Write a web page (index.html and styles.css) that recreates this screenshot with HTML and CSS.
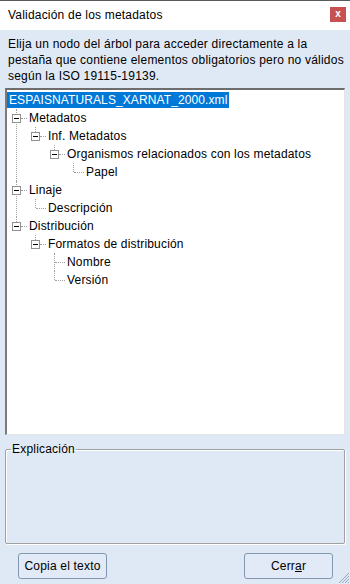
FILE: index.html
```html
<!DOCTYPE html>
<html lang="es">
<head>
    <meta charset="UTF-8">
    <meta name="viewport" content="width=device-width, initial-scale=1.0">
    <title>Validación de los metadatos</title>
    <link rel="stylesheet" href="styles.css">
</head>
<body>
    <div class="window">
        <div class="titlebar">
            <span class="title">Validación de los metadatos</span>
            <span class="close">x</span>
        </div>
        <div class="content">
            <p class="intro">Elija un nodo del árbol para acceder directamente a la pestaña que contiene elementos obligatorios pero no válidos según la ISO 19115-19139.</p>
            <div class="treebox">
                <ul class="tree">
                    <li class="root">
                        <div class="node"><span class="label selected">ESPAISNATURALS_XARNAT_2000.xml</span></div>
                        <ul>
                            <li>
                                <div class="node"><span class="exp"></span><span class="dash"></span><span class="label">Metadatos</span></div>
                                <ul>
                                    <li class="last">
                                        <div class="node"><span class="exp"></span><span class="dash"></span><span class="label">Inf. Metadatos</span></div>
                                        <ul>
                                            <li class="last">
                                                <div class="node"><span class="exp"></span><span class="dash"></span><span class="label">Organismos relacionados con los metadatos</span></div>
                                                <ul>
                                                    <li class="last">
                                                        <div class="node"><span class="dash leaf"></span><span class="label">Papel</span></div>
                                                    </li>
                                                </ul>
                                            </li>
                                        </ul>
                                    </li>
                                </ul>
                            </li>
                            <li>
                                <div class="node"><span class="exp"></span><span class="dash"></span><span class="label">Linaje</span></div>
                                <ul>
                                    <li class="last">
                                        <div class="node"><span class="dash leaf"></span><span class="label">Descripción</span></div>
                                    </li>
                                </ul>
                            </li>
                            <li class="last">
                                <div class="node"><span class="exp"></span><span class="dash"></span><span class="label">Distribución</span></div>
                                <ul>
                                    <li class="last">
                                        <div class="node"><span class="exp"></span><span class="dash"></span><span class="label">Formatos de distribución</span></div>
                                        <ul>
                                            <li>
                                                <div class="node"><span class="dash leaf"></span><span class="label">Nombre</span></div>
                                            </li>
                                            <li class="last">
                                                <div class="node"><span class="dash leaf"></span><span class="label">Versión</span></div>
                                            </li>
                                        </ul>
                                    </li>
                                </ul>
                            </li>
                        </ul>
                    </li>
                </ul>
            </div>
            <fieldset class="explain">
                <legend>Explicación</legend>
            </fieldset>
            <div class="buttons">
                <button>Copia el texto</button>
                <button>Cerr<u>a</u>r</button>
            </div>
        </div>
        <svg class="grip" width="12" height="12" viewBox="0 0 12 12">
            <path d="M11 1 L1 11 M11 4 L4 11 M11 7 L7 11 M11 10 L10 11" stroke="#9aa7b8" stroke-width="1"/>
        </svg>
    </div>
</body>
</html>
```

FILE: styles.css
```css
body {
    margin: 0;
    padding: 0;
    font-family: "Liberation Sans", Arial, sans-serif;
    font-size: 12px;
    color: #000;
    background-color: #dfe9f5;
}
.window {
    position: relative;
    width: 350px;
    height: 584px;
    display: flex;
    flex-direction: column;
    border-top: 1px solid #5a5a5a;
    box-sizing: border-box;
    overflow: hidden;
}
.titlebar {
    height: 29px;
    background-color: #fff;
    display: flex;
    align-items: center;
    justify-content: space-between;
    padding: 0 4px 0 8px;
    flex-shrink: 0;
}
.title {
    font-size: 12px;
    letter-spacing: 0.2px;
    margin-top: -2px;
}
.close {
    width: 16px;
    height: 15px;
    background-color: #c75050;
    color: #fff;
    font-weight: bold;
    font-size: 10px;
    line-height: 14px;
    text-align: center;
    margin-top: -2px;
}
.content {
    flex: 1;
    display: flex;
    flex-direction: column;
    padding: 0 5px;
}
.intro {
    margin: 6px 0 4px 3px;
    width: 342px;
    line-height: 16px;
    letter-spacing: 0.22px;
}
.treebox {
    height: 347px;
    background-color: #fff;
    border-top: 2px solid #6d6d6d;
    border-left: 2px solid #7a7a7a;
    border-right: 1px solid #e3e3e3;
    border-bottom: 1px solid #e3e3e3;
    box-sizing: border-box;
    padding-top: 1px;
}
.tree, .tree ul {
    list-style: none;
    margin: 0;
    padding: 0;
}
.tree ul ul {
    margin-left: 19px;
}
.tree ul li {
    position: relative;
}
.tree ul li::before {
    content: "";
    position: absolute;
    left: 9px;
    top: 0;
    bottom: 0;
    border-left: 1px dotted #a0a0a0;
}
.tree ul li.last::before {
    bottom: auto;
    height: 9px;
}
.node {
    height: 18px;
    display: flex;
    align-items: center;
    position: relative;
    padding-left: 5px;
    white-space: nowrap;
}
.root > .node {
    padding-left: 0;
}
.exp {
    position: relative;
    z-index: 1;
    width: 9px;
    height: 9px;
    box-sizing: border-box;
    border: 1px solid #919191;
    background-color: #fff;
}
.exp::after {
    content: "";
    position: absolute;
    left: 1px;
    top: 3px;
    width: 5px;
    height: 1px;
    background-color: #000;
}
.dash {
    width: 6px;
    border-top: 1px dotted #a0a0a0;
}
.dash.leaf {
    margin-left: 5px;
    width: 10px;
}
.label {
    padding: 0 2px;
    line-height: 16px;
    letter-spacing: 0.18px;
}
.label.selected {
    background-color: #0078d7;
    color: #fff;
    letter-spacing: 0.1px;
}
.explain {
    margin: 7px 0 0 0;
    padding: 0;
    height: 102px;
    box-sizing: border-box;
    border: 1px solid #a0a0a0;
    box-shadow: inset 1px 1px 0 #fff, 1px 1px 0 #fff;
    border-radius: 2px;
}
.explain legend {
    margin-left: 5px;
    padding: 0 1px;
    font-size: 12px;
    line-height: 14px;
    letter-spacing: 0.2px;
}
.buttons {
    display: flex;
    justify-content: space-between;
    padding: 9px 12px 0 13px;
}
.buttons button {
    width: 89px;
    height: 26px;
    font-family: "Liberation Sans", Arial, sans-serif;
    font-size: 12px;
    letter-spacing: 0.2px;
    color: #000;
    background-color: #e1eaf6;
    border: 1px solid #8397b0;
    border-radius: 3px;
    padding: 0;
}
.grip {
    position: absolute;
    right: 0;
    bottom: 0;
}
```
